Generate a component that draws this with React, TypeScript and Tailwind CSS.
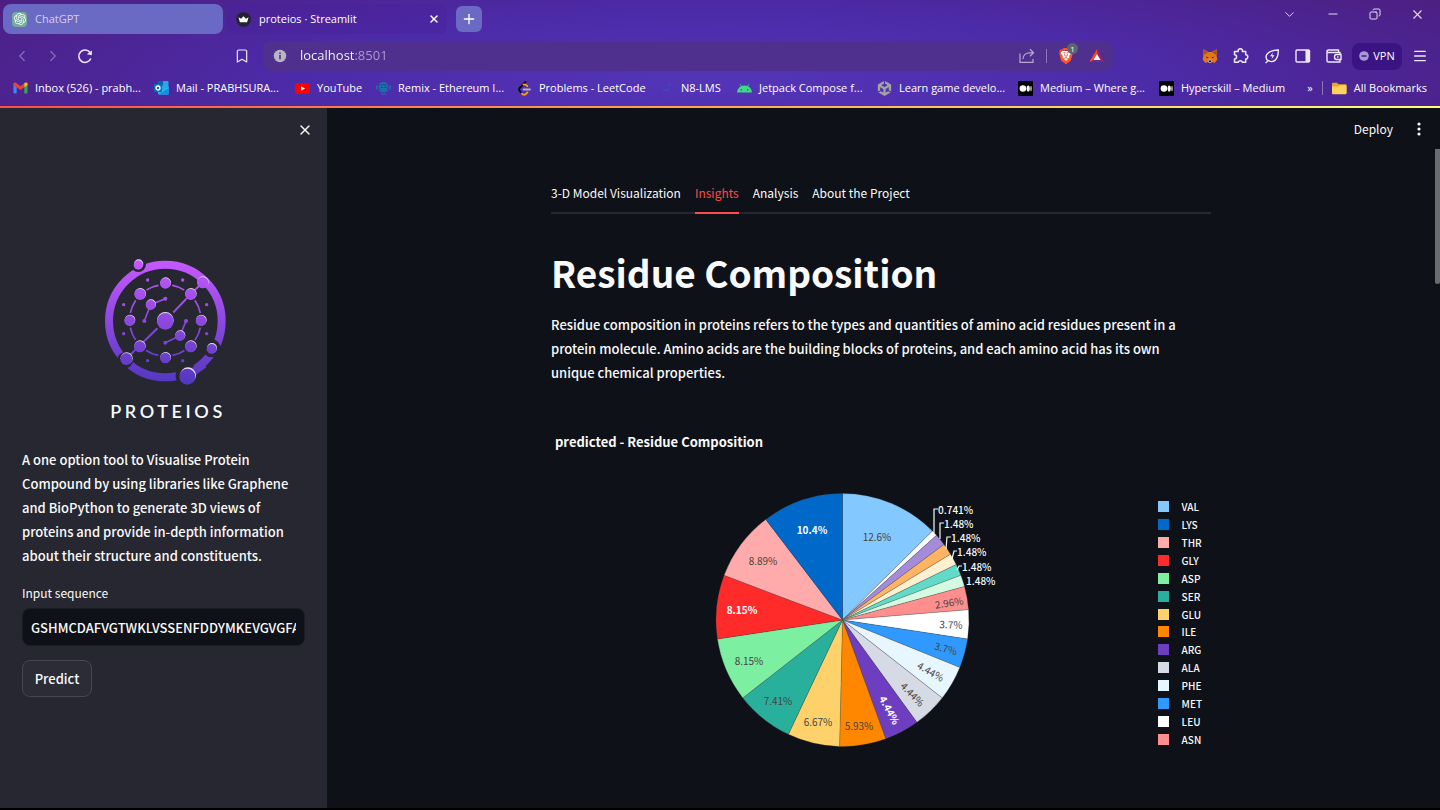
import { useState } from "react";
import { Bookmark, ChevronDown, ChevronLeft, ChevronRight, Copy, Menu, Minus, Plus, X } from "lucide-react";
import { SiBrave, SiOpenai, SiUnity } from "react-icons/si";

interface Residue {
  name: string;
  count: number;
  color: string;
  label: string;
  x: number;
  y: number;
  rotate?: number;
  light?: boolean;
}

// clockwise, starting at twelve o'clock
const residues: Residue[] = [
  { name: "VAL", count: 17, color: "#83c9ff", label: "12.6%", x: 177, y: 56 },
  { name: "TRP", count: 1, color: "#ffffff", label: "", x: 0, y: 0 },
  { name: "TYR", count: 2, color: "#a48cdb", label: "", x: 0, y: 0 },
  { name: "PRO", count: 2, color: "#ffb463", label: "", x: 0, y: 0 },
  { name: "HIS", count: 2, color: "#fff0cf", label: "", x: 0, y: 0 },
  { name: "GLN", count: 2, color: "#62dac8", label: "", x: 0, y: 0 },
  { name: "CYS", count: 2, color: "#d5fae2", label: "", x: 0, y: 0 },
  { name: "ASN", count: 4, color: "#ff8f8f", label: "2.96%", x: 249, y: 122, rotate: -9 },
  { name: "LEU", count: 5, color: "#ffffff", label: "3.7%", x: 251, y: 144, rotate: 2 },
  { name: "MET", count: 5, color: "#2f99ff", label: "3.7%", x: 246, y: 168, rotate: 15 },
  { name: "PHE", count: 6, color: "#e8f6ff", label: "4.44%", x: 231, y: 191, rotate: 30 },
  { name: "ALA", count: 6, color: "#d5dae5", label: "4.44%", x: 213, y: 214, rotate: 46 },
  { name: "ARG", count: 6, color: "#6d3fc0", label: "4.44%", x: 190, y: 230, rotate: 62, light: true },
  { name: "ILE", count: 8, color: "#ff8700", label: "5.93%", x: 159, y: 245 },
  { name: "GLU", count: 9, color: "#ffd16a", label: "6.67%", x: 118, y: 241 },
  { name: "SER", count: 10, color: "#29b09d", label: "7.41%", x: 78, y: 220 },
  { name: "ASP", count: 11, color: "#7defa1", label: "8.15%", x: 49, y: 180 },
  { name: "GLY", count: 11, color: "#ff2b2b", label: "8.15%", x: 42, y: 129, light: true },
  { name: "THR", count: 12, color: "#ffabab", label: "8.89%", x: 63, y: 80 },
  { name: "LYS", count: 14, color: "#0068c9", label: "10.4%", x: 112, y: 49, light: true },
];

const outsideLabels = [
  { text: "0.741%", x: 238, y: 29, line: "M234 53V29H238" },
  { text: "1.48%", x: 244, y: 43, line: "M240 59V43H244" },
  { text: "1.48%", x: 251, y: 57, line: "M246 69L247 57H251" },
  { text: "1.48%", x: 257, y: 71, line: "M252 79L254 71H257" },
  { text: "1.48%", x: 262, y: 86, line: "M257 90L259 86H262" },
  { text: "1.48%", x: 266, y: 100, line: "" },
];

const legend = ["VAL", "LYS", "THR", "GLY", "ASP", "SER", "GLU", "ILE", "ARG", "ALA", "PHE", "MET", "LEU", "ASN"];

const tabs = ["3-D Model Visualization", "Insights", "Analysis", "About the Project"];

const total = residues.reduce((sum, r) => sum + r.count, 0);

function slicePath(from: number, to: number) {
  const cx = 142.5;
  const cy = 140;
  const r = 126.5;
  const a = (from / total) * Math.PI * 2;
  const b = (to / total) * Math.PI * 2;
  return `M${cx} ${cy}L${cx + r * Math.sin(a)} ${cy - r * Math.cos(a)}A${r} ${r} 0 0 1 ${cx + r * Math.sin(b)} ${cy - r * Math.cos(b)}Z`;
}

function PieChart() {
  let start = 0;
  return (
    <svg width="310" height="280" viewBox="0 0 310 280" className="shrink-0 text-[10px]" role="img" aria-label="Residue composition pie chart">
      {residues.map((r) => {
        const d = slicePath(start, start + r.count);
        start += r.count;
        return <path key={r.name} d={d} fill={r.color} stroke="#444" strokeOpacity="0.5" strokeWidth="0.5" />;
      })}
      {residues.filter((r) => r.label).map((r) => (
        <text
          key={r.name}
          x={r.x}
          y={r.y}
          textAnchor="middle"
          dominantBaseline="central"
          transform={r.rotate ? `rotate(${r.rotate} ${r.x} ${r.y})` : undefined}
          className={r.light ? "fill-white font-bold" : "fill-[#444] font-normal"}
        >
          {r.label}
        </text>
      ))}
      {outsideLabels.map((l) => (
        <g key={l.y}>
          {l.line && <path d={l.line} fill="none" stroke="#fafafa" strokeWidth="1.2" />}
          <text x={l.x} y={l.y} dominantBaseline="central" className="fill-[#fafafa] font-medium">{l.text}</text>
        </g>
      ))}
    </svg>
  );
}

function Logo() {
  const nodes = [
    [229, 129, 16], [305, 162, 17], [336, 241, 16], [305, 319, 17],
    [229, 353, 16], [152, 319, 17], [122, 241, 16], [153, 162, 17],
    [341, 127, 17], [112, 356, 18], [185, 194, 15], [273, 287, 15],
  ];
  const dots = [[176, 120], [281, 120], [104, 194], [353, 194], [104, 281], [353, 281], [176, 362], [281, 362]];
  return (
    <svg width="126" height="128" viewBox="42 54 378 384" fill="none" role="img" aria-label="Proteios logo">
      <defs>
        <linearGradient id="logo" gradientUnits="userSpaceOnUse" x1="229" y1="60" x2="229" y2="430">
          <stop offset="0" stopColor="#c759ff" />
          <stop offset="0.5" stopColor="#8d48e0" />
          <stop offset="1" stopColor="#5238c0" />
        </linearGradient>
      </defs>
      <circle cx="229" cy="243" r="169" stroke="url(#logo)" strokeWidth="24" />
      <circle cx="229" cy="241" r="107" stroke="url(#logo)" strokeWidth="5" />
      <path d="M253 217L341 127M205 265L112 356M229 176L185 194L166 243M229 308L273 287L291 243" stroke="url(#logo)" strokeWidth="5" />
      <g fill="#262730">
        <circle cx="148" cy="73" r="23" />
        <circle cx="368" cy="325" r="27" />
        <circle cx="296" cy="408" r="36" />
        <circle cx="108" cy="361" r="24" />
        {nodes.slice(0, 8).map(([x, y, r]) => <circle key={`${x}-${y}`} cx={x} cy={y} r={r + 6} />)}
      </g>
      <path d="M305 162L341 127M205 265L112 356M253 217L305 162" stroke="url(#logo)" strokeWidth="5" />
      <path d="M296 408L345 372" stroke="url(#logo)" strokeWidth="24" />
      <g fill="#e9dcf7">
        {nodes.map(([x, y, r]) => <circle key={`${x}-${y}`} cx={x + 1} cy={y - 1} r={r} />)}
        <circle cx="149" cy="72" r="14" />
        <circle cx="369" cy="324" r="15" />
        <circle cx="297" cy="406" r="24" />
        <circle cx="229" cy="241" r="25" />
      </g>
      <g fill="url(#logo)">
        {nodes.map(([x, y, r]) => <circle key={`${x}-${y}`} cx={x} cy={y + 1} r={r} />)}
        <circle cx="148" cy="75" r="14" />
        <circle cx="368" cy="327" r="15" />
        <circle cx="295" cy="410" r="24" />
        <circle cx="229" cy="244" r="25" />
        {dots.map(([x, y]) => <circle key={`${x}-${y}`} cx={x} cy={y} r="5" />)}
        <circle cx="229" cy="176" r="6" />
        <circle cx="166" cy="243" r="6" />
        <circle cx="229" cy="308" r="6" />
        <circle cx="291" cy="243" r="6" />
      </g>
    </svg>
  );
}

const GmailIcon = () => (
  <svg width="15" height="12" viewBox="0 0 15 12">
    <path d="M0.5 1.5V10.5Q0.5 11.5 1.5 11.5H3.7V4.5Z" fill="#4285f4" />
    <path d="M11.3 4.5V11.5H13.5Q14.5 11.5 14.5 10.5V1.5Z" fill="#34a853" />
    <path d="M0.5 3.2V1.8C0.5 0.4 1.9 0 3 0.8L7.5 4.2L12 0.8L11.3 5.2L7.5 8L3.7 5.2Z" fill="#ea4335" />
    <path d="M11.3 5.2V1.3L12 0.8C13.1 0 14.5 0.4 14.5 1.8V3.2Z" fill="#fbbc04" />
  </svg>
);

const OutlookIcon = () => (
  <svg width="15" height="14" viewBox="0 0 15 14">
    <rect x="4" width="10.5" height="9" rx="1" fill="#28a8ea" />
    <path d="M4 0h5v4.5H4z" fill="#0364b8" />
    <path d="M4 6l5.5 3L15 6v6.5q0 1-1 1H5q-1 0-1-1z" fill="#35b8f1" />
    <path d="M4 13.5L15 7v5.5q0 1-1 1z" fill="#1490df" />
    <rect y="3" width="8" height="8" rx="1" fill="#0a6cc7" />
    <circle cx="4" cy="7" r="2" fill="none" stroke="#fff" strokeWidth="1.3" />
  </svg>
);

const YoutubeIcon = () => (
  <svg width="15" height="11" viewBox="0 0 15 11">
    <rect width="15" height="11" rx="2.6" fill="#f00" />
    <path d="M6 3.2L10 5.5L6 7.8Z" fill="#fff" />
  </svg>
);

const RemixIcon = () => (
  <svg width="15" height="14" viewBox="0 0 15 14" fill="none" stroke="#1577a8">
    <circle cx="7.5" cy="5.5" r="4.6" fill="#1577a8" stroke="none" />
    <path d="M4.5 4.5Q7.5 2.5 10.5 4.5M5 6.5h2M8.5 6.5h2" stroke="#3a2f9c" />
    <path d="M3 9Q7.5 12.5 12 9M5 12.5L7.5 13.5L10 12.5" strokeWidth="1.2" />
    <path d="M1 4.5v4M14 4.5v4" strokeWidth="1.6" />
  </svg>
);

const LeetcodeIcon = () => (
  <svg width="15" height="15" viewBox="0 0 15 15" fill="none" strokeLinecap="round" strokeWidth="1.8">
    <path d="M8.5 1L3 6.5Q1.2 8.6 3 10.4L4 11.5" stroke="#000" />
    <path d="M5 12.6Q7.2 14.8 9 12.9L10.4 11.5M10.4 5.2L9 3.9Q7.6 3 6.4 3.5" stroke="#ffa116" />
    <path d="M6.5 8.5H13" stroke="#b3b3b3" />
  </svg>
);

const LmsIcon = () => (
  <svg width="15" height="12" viewBox="0 0 15 12" stroke="#3d52c4" fill="none">
    <path d="M4 8l2 1 2-2 2 2M9 4l3-2" />
  </svg>
);

const AndroidIcon = () => (
  <svg width="15" height="9" viewBox="0 0 15 9">
    <path d="M0 8.5C0.3 5.3 2 3.2 4 2.2L2.8 0.3L3.4 0L4.6 1.9Q7.5 0.9 10.4 1.9L11.6 0L12.2 0.3L11 2.2C13 3.2 14.7 5.3 15 8.5Z" fill="#3ddc84" />
    <circle cx="4.2" cy="5.7" r="0.7" fill="#24503c" />
    <circle cx="10.8" cy="5.7" r="0.7" fill="#24503c" />
  </svg>
);

const MediumIcon = () => (
  <svg width="15" height="15" viewBox="0 0 15 15">
    <rect width="15" height="15" rx="1" fill="#000" />
    <circle cx="4.9" cy="7.5" r="3.3" fill="#fff" />
    <ellipse cx="10.2" cy="7.5" rx="1.6" ry="3.1" fill="#fff" />
    <ellipse cx="13" cy="7.5" rx="0.6" ry="2.8" fill="#fff" />
  </svg>
);

const FolderIcon = () => (
  <svg width="15" height="13" viewBox="0 0 15 13">
    <path d="M0 1.8Q0 0.8 1 0.8H5L6.5 2.2H13.5Q14.5 2.2 14.5 3.2V11H0Z" fill="#e8a825" />
    <path d="M0 4.5H6L7.5 3.2H14.5V11.3Q14.5 12.3 13.5 12.3H1Q0 12.3 0 11.3Z" fill="#ffd25c" />
  </svg>
);

const CrownIcon = () => (
  <svg width="15" height="15" viewBox="0 0 16 16">
    <circle cx="8" cy="8" r="7.8" fill="#22252e" />
    <path d="M2.6 5.6L5.4 7.2L8 4.4L10.6 7.2L13.4 5.6L11.8 10.8H4.2Z" fill="#fff" />
  </svg>
);

const FoxIcon = () => (
  <svg width="16" height="16" viewBox="0 0 16 16">
    <path d="M1 1L6.5 4H9.5L15 1L14.6 8L15.4 11.5L12.5 15L10 14H6L3.5 15L0.6 11.5L1.4 8Z" fill="#e2761b" />
    <path d="M1 1L6 4.5L1.6 7ZM15 1L10 4.5L14.4 7Z" fill="#a8521c" />
    <path d="M4.2 8.6L6.6 9.6L4.8 10.3ZM11.8 8.6L9.4 9.6L11.2 10.3Z" fill="#2b2b33" />
    <path d="M6 12.2L8 11.4L10 12.2L9.4 14.8H6.6Z" fill="#d7c1b3" />
    <path d="M6.6 12.6H9.4L9 14H7Z" fill="#16161c" />
  </svg>
);

const bookmarks = [
  { label: "Inbox (526) - prabh...", icon: <GmailIcon />, width: "w-[126px]" },
  { label: "Mail - PRABHSURA...", icon: <OutlookIcon />, width: "w-[126px]" },
  { label: "YouTube", icon: <YoutubeIcon />, width: "w-[66px]" },
  { label: "Remix - Ethereum I...", icon: <RemixIcon />, width: "w-[126px]" },
  { label: "Problems - LeetCode", icon: <LeetcodeIcon />, width: "w-[127px]" },
  { label: "N8-LMS", icon: <LmsIcon />, width: "w-[63px]" },
  { label: "Jetpack Compose f...", icon: <AndroidIcon />, width: "w-[125px]" },
  { label: "Learn game develo...", icon: <SiUnity size={15} color="#a3a3a3" />, width: "w-[126px]" },
  { label: "Medium – Where g...", icon: <MediumIcon />, width: "w-[126px]" },
  { label: "Hyperskill – Medium", icon: <MediumIcon />, width: "w-[126px]" },
];

function Browser() {
  const [url, setUrl] = useState("localhost:8501");

  return (
    <header className="bg-[radial-gradient(ellipse_60%_130%_at_50%_75%,#5435b8_0%,#4c2ba8_50%,#4c1f82_100%)] text-white font-['Open_Sans','Noto_Sans',sans-serif] text-[11px]">
      <div className="flex h-[38px] items-center pl-[3px]">
        <button className="flex h-[30px] w-[220px] items-center gap-2 rounded-lg bg-[#6a69c4] pl-[9px] text-[#d9cdf2]">
          <span className="flex size-[15px] items-center justify-center rounded-sm bg-[#75ac9d]">
            <SiOpenai size={12} color="#fff" />
          </span>
          ChatGPT
        </button>
        <div className="ml-1 flex h-[30px] w-[220px] items-center gap-2 rounded-lg bg-[#48219a]/40 pl-[9px]">
          <CrownIcon />
          <button className="flex-1 text-left">proteios · Streamlit</button>
          <button aria-label="Close tab" className="mr-[7px]"><X size={12} strokeWidth={3} /></button>
        </div>
        <button aria-label="New tab" className="ml-[9px] flex size-[26px] items-center justify-center rounded-md bg-[#6a69c4]">
          <Plus size={16} strokeWidth={2} />
        </button>
        <div className="ml-auto mb-[10px] flex items-center gap-[29px] pr-[15px] text-[#e3d9f5]">
          <button aria-label="Search tabs"><ChevronDown size={15} strokeWidth={1.5} /></button>
          <button aria-label="Minimize"><Minus size={14} strokeWidth={1.8} /></button>
          <button aria-label="Restore"><Copy size={12} strokeWidth={2} className="-scale-x-100" /></button>
          <button aria-label="Close"><X size={15} strokeWidth={1.8} /></button>
        </div>
      </div>

      <div className="flex h-9 items-center pl-[13px] text-[#eee6fb]">
        <button aria-label="Back" className="text-[#8c6fc0]"><ChevronLeft size={18} strokeWidth={1.5} /></button>
        <button aria-label="Forward" className="ml-[13px] text-[#8c6fc0]"><ChevronRight size={18} strokeWidth={1.5} /></button>
        <button aria-label="Reload" className="ml-[15px]">
          <svg width="16" height="16" viewBox="0 0 16 16" fill="none" stroke="currentColor" strokeWidth="1.6">
            <path d="M13.8 10.5A6.2 6.2 0 1 1 13 4.5" />
            <path d="M9.8 6.2L14.8 7.2L15 2.4Z" fill="currentColor" stroke="none" />
          </svg>
        </button>
        <button aria-label="Bookmark this page" className="ml-[141px]"><Bookmark size={16} strokeWidth={1.8} /></button>
        <div className="ml-[13px] flex h-[30px] flex-1 items-center rounded-lg bg-[#50308f] pl-[10px]">
          <svg width="14" height="14" viewBox="0 0 14 14">
            <circle cx="7" cy="7" r="6.2" fill="#b9b3c4" />
            <path d="M7 6V10.3M7 3.4V5" stroke="#50308f" strokeWidth="1.6" />
          </svg>
          <input
            aria-label="Address"
            value={url}
            onChange={(e) => setUrl(e.target.value)}
            className="ml-[13px] min-w-0 flex-1 bg-[linear-gradient(90deg,#ffffff_54px,#b09cd4_54px)] bg-clip-text text-[13px] text-transparent outline-none"
          />
          <button aria-label="Share" className="text-[#b7a9d0]">
            <svg width="16" height="16" viewBox="0 0 16 16" fill="none" stroke="currentColor" strokeWidth="1.2">
              <path d="M1 5.5V14.3H14V11" />
              <path d="M4 11C4 7 7 4.8 10.5 4.8H14.5M11 1.3L14.6 4.8L11 8.3" />
            </svg>
          </button>
          <span className="mx-[11px] h-[14px] w-px bg-[#8d75b8]" />
          <button aria-label="Brave Shields" className="relative flex size-4 items-center justify-center">
            <svg width="14" height="15" viewBox="0 0 14 15" className="absolute">
              <path d="M3 2H11L13 4L10.5 12L7 14.5L3.5 12L1 4Z" fill="#fff" />
            </svg>
            <SiBrave size={16} color="#fb542b" className="relative" />
            <span className="absolute -top-[5px] left-[9px] flex size-[11px] items-center justify-center rounded-full bg-[#5e6470] text-[8px] text-white">1</span>
          </button>
          <button aria-label="Brave Rewards" className="ml-[15px] mr-2">
            <svg width="16" height="14" viewBox="0 0 16 14">
              <path d="M8 0.5L0.5 13H8Z" fill="#ff4724" />
              <path d="M8 0.5L15.5 13H8Z" fill="#9e1f63" />
              <path d="M0.5 13H15.5L8 8.5Z" fill="#662d91" />
              <path d="M0.5 13L8 0.5L8.5 4L3.5 11.5Z" fill="#ff4724" />
              <path d="M8 5L4.5 11H11.5Z" fill="#fff" />
            </svg>
          </button>
        </div>
        <div className="ml-[89px] flex items-center gap-[15px]">
          <button aria-label="MetaMask"><FoxIcon /></button>
          <button aria-label="Extensions">
            <svg width="16" height="16" viewBox="0 0 16 16" fill="none" stroke="currentColor" strokeWidth="1.5" strokeLinejoin="round">
              <path d="M1.5 3.5H5.2A2.2 2.2 0 1 1 9.4 3.5H12.7V6.8A2.1 2.1 0 1 1 12.7 11V14.3H9.4A2.2 2.2 0 0 0 5.2 14.3H1.5V11A2.1 2.1 0 0 0 1.5 6.8Z" />
            </svg>
          </button>
          <button aria-label="Energy saver">
            <svg width="16" height="16" viewBox="0 0 16 16" fill="none" stroke="currentColor" strokeWidth="1.4">
              <path d="M3.5 12.5C0 8 3 2.5 14.3 2C14.5 12 9 15.5 4.5 12.5L1.5 15" />
              <path d="M9 4.5L6 8.3H8.3L7.5 11.2L10.5 7.3H8.3Z" fill="currentColor" stroke="none" />
            </svg>
          </button>
          <button aria-label="Side panel">
            <svg width="16" height="14" viewBox="0 0 16 14" fill="none">
              <rect x="1" y="1" width="13.5" height="12" rx="1" stroke="currentColor" strokeWidth="1.4" />
              <path d="M10.5 1H14.5V13H10.5Z" fill="currentColor" />
            </svg>
          </button>
          <button aria-label="Wallet">
            <svg width="16" height="14" viewBox="0 0 16 14" fill="none" stroke="currentColor" strokeWidth="1.4">
              <path d="M14 5V3.5H3Q1 3.5 1 2Q1 1 2.5 1H12.5V3.5M1 2V11.5Q1 13 2.5 13H14V11" />
              <path d="M15 5.5H10.5Q8.5 5.5 8.5 8Q8.5 10.5 10.5 10.5H15Z" />
              <path d="M11 8H12.5" />
            </svg>
          </button>
        </div>
        <button className="ml-[10px] flex h-[27px] w-[50px] items-center justify-center gap-1 rounded-lg bg-[#3a1482] text-white">
          <svg width="10" height="10" viewBox="0 0 10 10">
            <circle cx="5" cy="5" r="4.8" fill="#a898d8" />
            <path d="M2.5 5H7.5" stroke="#3a1482" strokeWidth="1.4" />
          </svg>
          VPN
        </button>
        <button aria-label="Menu" className="ml-[10px] mr-3"><Menu size={16} strokeWidth={2} /></button>
      </div>

      <nav className="flex h-8 items-center whitespace-nowrap pl-[13px] pr-[13px] pb-1">
        <div className="flex items-center gap-[15px]">
          {bookmarks.map((b) => (
            <a key={b.label} href="#" className={`flex items-center gap-[7px] ${b.width}`}>
              <span className="flex w-[15px] shrink-0 justify-center">{b.icon}</span>
              {b.label}
            </a>
          ))}
        </div>
        <button aria-label="More bookmarks" className="ml-auto">»</button>
        <span className="mx-[9px] h-[14px] w-px bg-[#8d75b8]" />
        <a href="#" className="flex items-center gap-[7px]">
          <FolderIcon />
          All Bookmarks
        </a>
      </nav>
      <div className="h-[2px] bg-[linear-gradient(90deg,#ff4b4b,#ffa14f_45%,#fffd80)]" />
    </header>
  );
}

function Sidebar() {
  const [sequence, setSequence] = useState("GSHMCDAFVGTWKLVSSENFDDYMKEVGVGFATRKVAGMAKPNMIISVNGDLVTIRSESTFKNTEISFKLGVEFDEITADDRKVKSIITLDGGALVQVQKWDGKSTTIKRKRDGDKLVVECVMKGVTSTRVYERA");

  return (
    <aside className="w-[327px] shrink-0 bg-[#262730] px-[22px]">
      <div className="-mr-2 flex h-[150px] justify-end pt-[14px]">
        <button aria-label="Close sidebar" className="size-4"><X size={16} strokeWidth={2} /></button>
      </div>
      <div className="flex flex-col items-center pl-[5px]">
        <Logo />
        <p className="mt-[14px] pl-1 font-['Lato',sans-serif] text-[18px] font-semibold leading-[22px] tracking-[0.2em]">PROTEIOS</p>
      </div>
      <p className="mt-[26px] text-[13px] leading-6">
        A one option tool to Visualise Protein Compound by using libraries like Graphene and BioPython to generate 3D views of proteins and provide in-depth information about their structure and constituents.
      </p>
      <label htmlFor="sequence" className="mt-[15px] block text-[12px] font-normal leading-5">Input sequence</label>
      <input
        id="sequence"
        value={sequence}
        onChange={(e) => setSequence(e.target.value)}
        className="mt-[5px] h-[38px] w-full rounded-lg border border-[#1a1c24] bg-[#0e1117] px-2 text-[13px] outline-none"
      />
      <button className="mt-[14px] flex h-[37px] w-[70px] items-center justify-center rounded-lg border border-[#45464f] bg-[#2b2c36] text-[13px]">
        Predict
      </button>
    </aside>
  );
}

export default function App() {
  const [active, setActive] = useState("Insights");

  return (
    <div className="flex min-h-screen flex-col bg-[#0e1117]">
      <Browser />
      <div className="flex flex-1 border-b-2 border-black font-['Noto_Sans_CJK_SC',sans-serif] font-medium text-[#fafafa]">
        <Sidebar />
        <main className="min-w-0 flex-1">
          <div className="flex h-[42px] items-center justify-end gap-5 pr-[10px] text-[12px] font-normal">
            <button>Deploy</button>
            <button aria-label="Main menu" className="flex w-3 justify-center">
              <svg width="4" height="14" viewBox="0 0 4 14" fill="currentColor">
                <circle cx="2" cy="2" r="1.6" />
                <circle cx="2" cy="7" r="1.6" />
                <circle cx="2" cy="12" r="1.6" />
              </svg>
            </button>
          </div>
          <div className="mx-auto mt-[25px] max-w-[660px]">
            <div role="tablist" className="flex gap-[14px] border-b-2 border-[#262730]">
              {tabs.map((t) => (
                <button
                  key={t}
                  role="tab"
                  aria-selected={t === active}
                  onClick={() => setActive(t)}
                  className={`-mb-[2px] h-[39px] border-b-2 pb-[2px] text-[12px] font-normal ${t === active ? "border-[#ff4b4b] text-[#ff4b4b]" : "border-transparent"}`}
                >
                  {t}
                </button>
              ))}
            </div>
            <h1 className="mt-[33px] text-[37px] font-bold leading-[50px]">Residue Composition</h1>
            <p className="mt-4 pr-6 text-[13px] leading-6">
              Residue composition in proteins refers to the types and quantities of amino acid residues present in a protein molecule. Amino acids are the building blocks of proteins, and each amino acid has its own unique chemical properties.
            </p>
            <section className="mt-[47px]">
              <h2 className="pl-1 text-[13px] font-bold leading-5">predicted - Residue Composition</h2>
              <div className="mt-7 flex justify-between pl-[149px] pr-[9px]">
                <PieChart />
                <ul className="mt-[18px] flex h-[250px] flex-col justify-between text-[10px]">
                  {legend.map((name) => (
                    <li key={name} className="flex h-[18px] items-center gap-[13px]">
                      <span className="size-[11px]" style={{ background: residues.find((r) => r.name === name)?.color }} />
                      {name}
                    </li>
                  ))}
                </ul>
              </div>
            </section>
          </div>
        </main>
        <div className="w-[5px] shrink-0 pt-[41px]">
          <div className="h-[135px] rounded-b-sm bg-[#6b6c70]" />
        </div>
      </div>
    </div>
  );
}
